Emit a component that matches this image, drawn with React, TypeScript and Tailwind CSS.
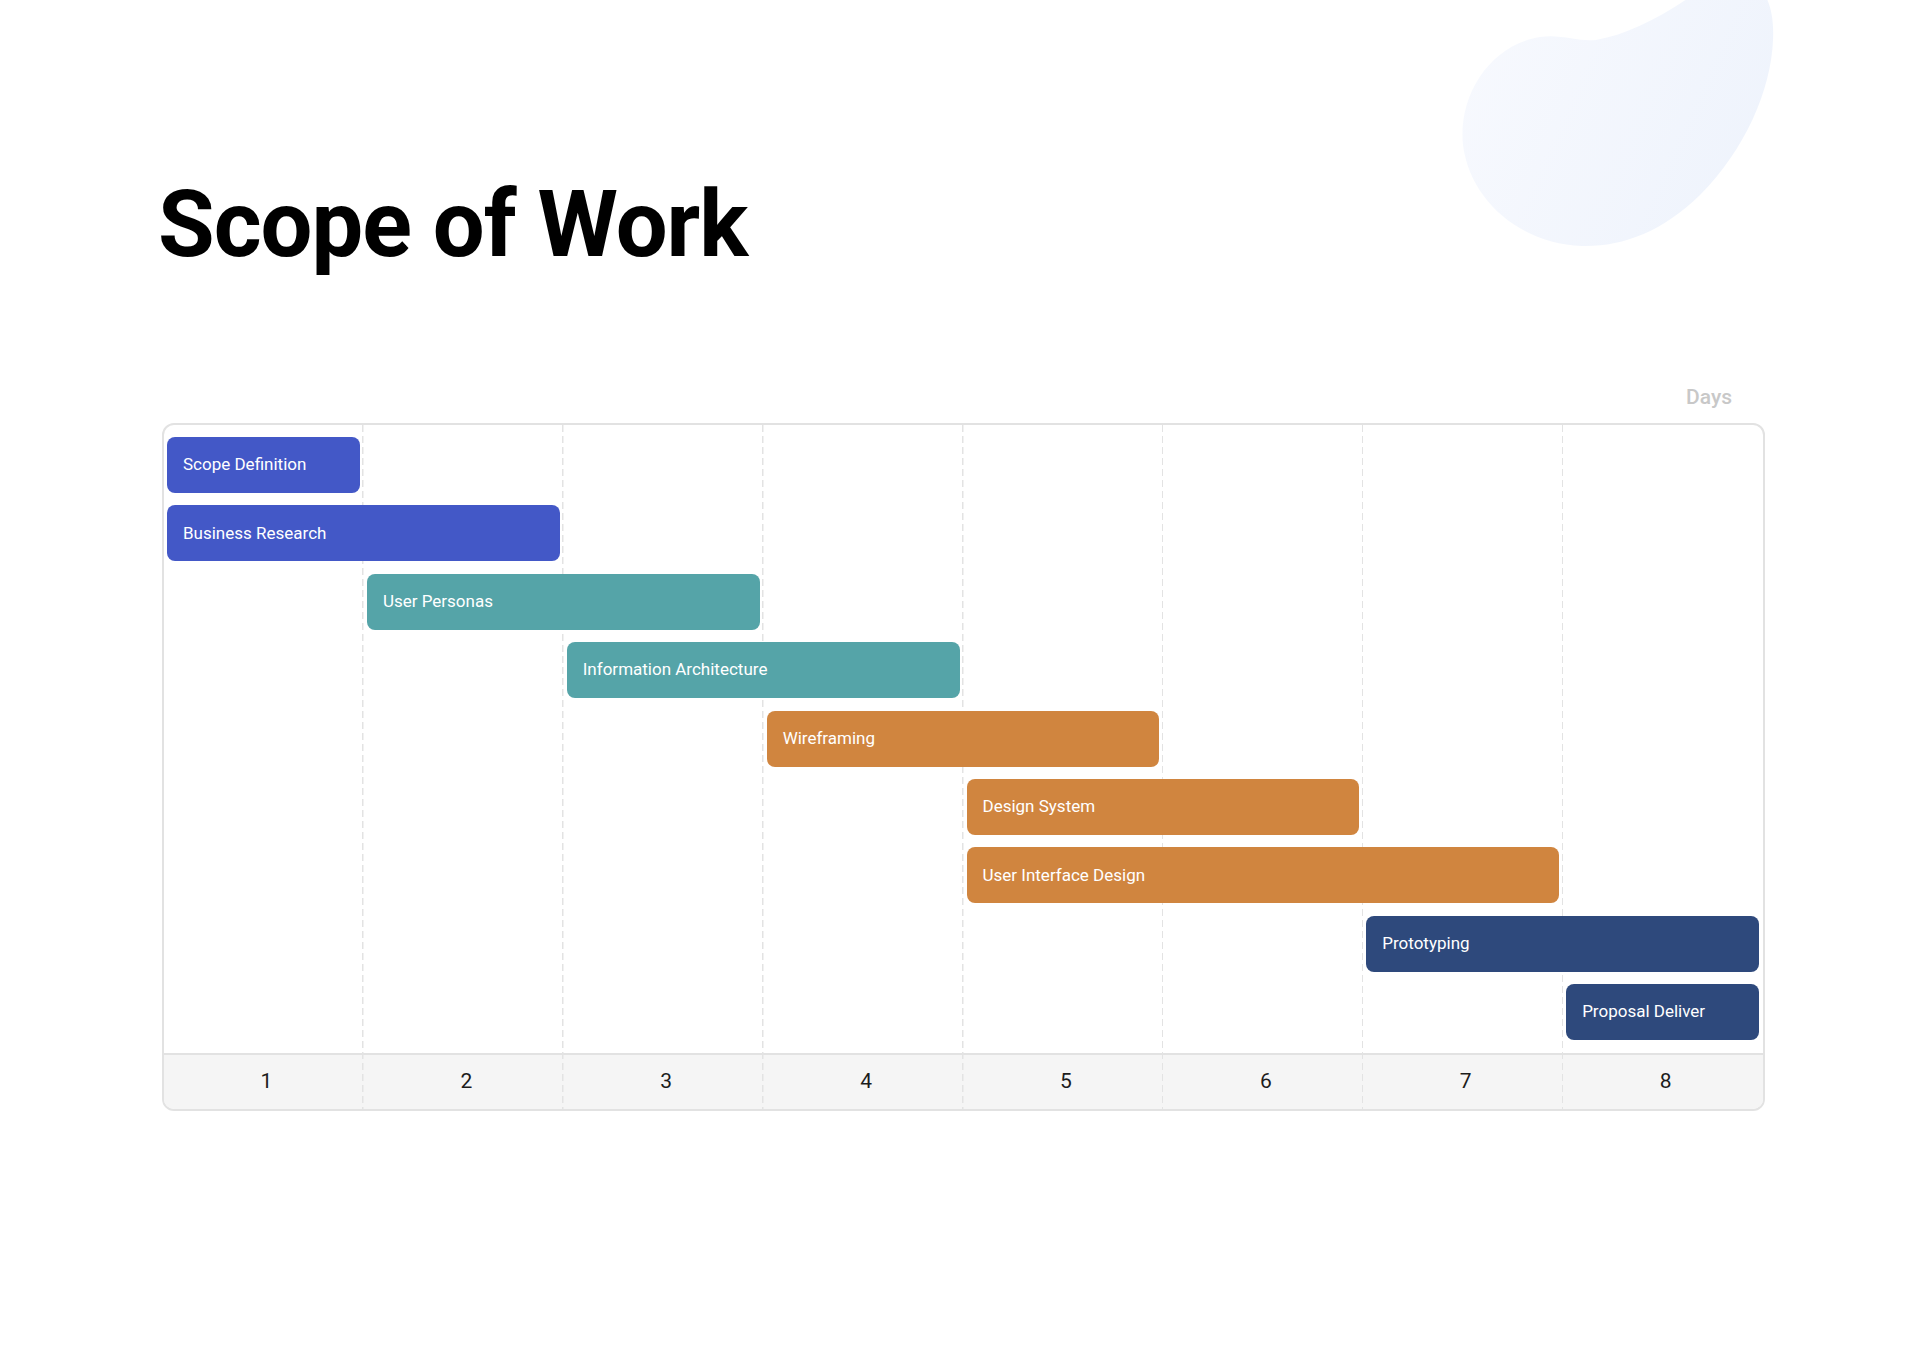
import React from 'react';

type Task = {
  label: string;
  span: string;
  color: string;
};

const tasks: Task[] = [
  { label: 'Scope Definition', span: 'col-start-1 col-end-2', color: 'bg-[#4358c7]' },
  { label: 'Business Research', span: 'col-start-1 col-end-3', color: 'bg-[#4358c7]' },
  { label: 'User Personas', span: 'col-start-2 col-end-4', color: 'bg-[#55a4a8]' },
  { label: 'Information Architecture', span: 'col-start-3 col-end-5', color: 'bg-[#55a4a8]' },
  { label: 'Wireframing', span: 'col-start-4 col-end-6', color: 'bg-[#d0853f]' },
  { label: 'Design System', span: 'col-start-5 col-end-7', color: 'bg-[#d0853f]' },
  { label: 'User Interface Design', span: 'col-start-5 col-end-8', color: 'bg-[#d0853f]' },
  { label: 'Prototyping', span: 'col-start-7 col-end-9', color: 'bg-[#2e497c]' },
  { label: 'Proposal Deliver', span: 'col-start-8 col-end-9', color: 'bg-[#2e497c]' },
];

const days = [1, 2, 3, 4, 5, 6, 7, 8];

const Blob = () => (
  <svg
    className="pointer-events-none absolute right-0 top-0"
    width="480"
    height="260"
    viewBox="1440 0 480 260"
    fill="none"
    xmlns="http://www.w3.org/2000/svg"
  >
    <defs>
      <linearGradient id="blobFill" x1="1460" y1="60" x2="1770" y2="200" gradientUnits="userSpaceOnUse">
        <stop offset="0" stopColor="#f7f9fe" />
        <stop offset="1" stopColor="#eef3fc" />
      </linearGradient>
    </defs>
    <path
      d="M1540 37 C1562 34 1578 42 1596 40 C1630 34 1665 15 1700 -10 C1740 -40 1776 -20 1773 40 C1771 90 1745 150 1700 195 C1662 232 1622 247 1582 246 C1520 244 1470 200 1463 145 C1458 95 1490 45 1540 37 Z"
      fill="url(#blobFill)"
    />
  </svg>
);

export default function App() {
  return (
    <div className="relative min-h-[1352px] w-full overflow-hidden bg-white font-['Roboto','Noto_Sans',sans-serif]">
      <Blob />

      <div className="relative">
        {/* Title */}
        <h1 className="pl-[158px] pt-[179px] text-[92px] font-bold leading-[92px] tracking-[-1px] text-black">
          Scope of Work
        </h1>

        {/* Days label */}
        <div className="ml-[162px] mt-[114px] flex w-[1603px] justify-end pr-[33px] text-[21px] font-medium leading-[24px] text-[#c8c8c8]">
          Days
        </div>

        {/* Chart */}
        <div className="relative ml-[162px] mt-[14px] w-[1603px] overflow-hidden rounded-[12px] border-2 border-[#e2e2e2]">
          {/* Dashed column lines */}
          <div className="pointer-events-none absolute inset-0 grid grid-cols-8">
            {days.slice(0, 7).map((d) => (
              <div
                key={d}
                className="bg-[repeating-linear-gradient(to_bottom,#e3e3e3_0px,#e3e3e3_7px,transparent_7px,transparent_11px)] bg-[length:1.5px_100%] bg-right bg-no-repeat"
              />
            ))}
            <div />
          </div>

          {/* Bars */}
          <div className="grid grid-cols-8 gap-y-[12.4px] pb-[13px] pt-[12px]">
            {tasks.map((t) => (
              <div
                key={t.label}
                className={`${t.span} ${t.color} relative ml-[3px] mr-[4px] flex h-[56px] items-center rounded-[8px] pl-[16px] text-[17px] text-white`}
              >
                {t.label}
              </div>
            ))}
          </div>

          {/* Axis */}
          <div className="grid h-[56px] grid-cols-8 border-t-2 border-[#e2e2e2] bg-[#f5f5f5]">
            {days.map((d) => (
              <div key={d} className="flex items-center justify-center pl-[5px] text-[21px] text-[#1c1c1c]">
                {d}
              </div>
            ))}
          </div>
        </div>
      </div>
    </div>
  );
}
